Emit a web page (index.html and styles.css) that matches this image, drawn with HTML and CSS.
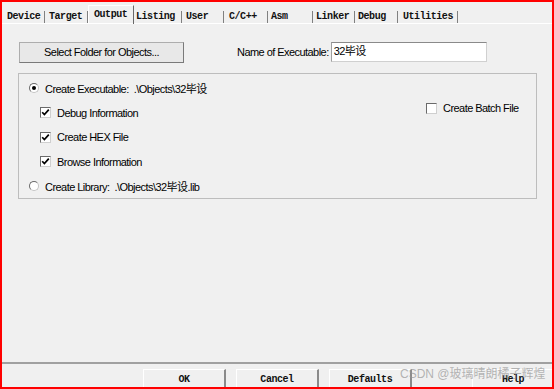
FILE: index.html
```html
<!DOCTYPE html>
<html lang="en">
<head>
<meta charset="UTF-8">
<meta name="viewport" content="width=device-width, initial-scale=1.0">
<title>Options for Target - Output</title>
<link rel="stylesheet" href="styles.css">
</head>
<body>
<div class="window">
    <div class="tabs">
        <div class="tab tab-device">Device</div>
        <div class="tab tab-target">Target</div>
        <div class="tab tab-output active">Output</div>
        <div class="tab tab-listing">Listing</div>
        <div class="tab tab-user">User</div>
        <div class="tab tab-cpp">C/C++</div>
        <div class="tab tab-asm">Asm</div>
        <div class="tab tab-linker">Linker</div>
        <div class="tab tab-debug">Debug</div>
        <div class="tab tab-utilities">Utilities</div>
    </div>

    <div class="panel">
        <div class="top-row">
            <button class="btn btn-folder">Select Folder for Objects...</button>
            <span class="field-label">Name of Executable:</span>
            <div class="text-input">32毕设</div>
        </div>

        <div class="group">
            <div class="group-main">
                <div class="opt">
                    <span class="radio checked"></span>
                    <span>Create Executable:&nbsp;&nbsp;.\Objects\32毕设</span>
                </div>
                <div class="opt sub">
                    <span class="check"><svg viewBox="0 0 9 9" width="9" height="9"><path d="M1.2 4.2 L3.4 6.6 L7.8 1.6" fill="none" stroke="#000" stroke-width="1.7"/></svg></span>
                    <span>Debug Information</span>
                </div>
                <div class="opt sub">
                    <span class="check"><svg viewBox="0 0 9 9" width="9" height="9"><path d="M1.2 4.2 L3.4 6.6 L7.8 1.6" fill="none" stroke="#000" stroke-width="1.7"/></svg></span>
                    <span>Create HEX File</span>
                </div>
                <div class="opt sub">
                    <span class="check"><svg viewBox="0 0 9 9" width="9" height="9"><path d="M1.2 4.2 L3.4 6.6 L7.8 1.6" fill="none" stroke="#000" stroke-width="1.7"/></svg></span>
                    <span>Browse Information</span>
                </div>
                <div class="opt">
                    <span class="radio"></span>
                    <span>Create Library:&nbsp;&nbsp;.\Objects\32毕设.lib</span>
                </div>
            </div>
            <div class="group-side">
                <div class="opt">
                    <span class="check"></span>
                    <span>Create Batch File</span>
                </div>
            </div>
        </div>
    </div>

    <div class="footer">
        <button class="btn-mono">OK</button>
        <button class="btn-mono">Cancel</button>
        <button class="btn-mono">Defaults</button>
        <button class="btn-mono btn-help">Help</button>
    </div>

    <div class="watermark">CSDN @玻璃晴朗橘子辉煌</div>
</div>
</body>
</html>
```

FILE: styles.css
```css
body {
    margin: 0;
    padding: 0;
    background-color: #f0f0f0;
}
.window {
    position: relative;
    width: 554px;
    height: 389px;
    box-sizing: border-box;
    border: 2px solid #ff0000;
    background-color: #f0f0f0;
    overflow: hidden;
    display: flex;
    flex-direction: column;
    font-family: "Liberation Sans", "Noto Sans CJK SC", sans-serif;
    font-size: 11px;
    letter-spacing: -0.55px;
    color: #000;
}

/* tab strip */
.tabs {
    display: flex;
    align-items: flex-end;
    height: 21px;
    padding-left: 1px;
    border-bottom: 1px solid #ffffff;
    font-family: "Liberation Mono", monospace;
    font-weight: bold;
    font-size: 10px;
    letter-spacing: -0.45px;
    color: #111;
}
.tab {
    box-sizing: border-box;
    height: 12px;
    line-height: 12px;
    padding-left: 4px;
    border-right: 1px solid #808080;
    white-space: nowrap;
}
.tab.active {
    height: 19px;
    line-height: 18px;
    padding-left: 5px;
    border-top: 1px solid #ffffff;
    border-left: 1px solid #ffffff;
    border-right: 1px solid #696969;
    margin-bottom: -1px;
}
.tab-device { width: 42px; }
.tab-target { width: 43px; }
.tab-output { width: 46px; }
.tab-listing { width: 48px; padding-left: 2px; }
.tab-user { width: 42px; }
.tab-cpp { width: 44px; padding-left: 5px; }
.tab-asm { width: 45px; padding-left: 3px; }
.tab-linker { width: 42px; padding-left: 3px; }
.tab-debug { width: 43px; padding-left: 3px; }
.tab-utilities { width: 60px; padding-left: 5px; }

/* page body */
.panel {
    flex: 1;
    padding: 18px 0 0 16px;
}
.top-row {
    display: flex;
    align-items: center;
    height: 20px;
}
.btn {
    font-family: inherit;
    font-size: inherit;
    letter-spacing: inherit;
    color: #000;
    background-color: #e8e8e8;
    border: 1px solid #adadad;
    border-right-color: #7a7a7a;
    border-bottom-color: #7a7a7a;
    padding: 0;
    cursor: pointer;
}
.btn-folder {
    width: 165px;
    height: 21px;
    margin-left: 1px;
}
.field-label {
    margin-left: 53px;
}
.text-input {
    box-sizing: border-box;
    width: 156px;
    height: 20px;
    margin-left: 2px;
    padding-left: 2px;
    line-height: 17px;
    background-color: #fff;
    border: 1px solid #d0d0d0;
    border-top-color: #8a8a8a;
    border-left-color: #a0a0a0;
}

/* group box */
.group {
    box-sizing: border-box;
    display: flex;
    width: 519px;
    height: 126px;
    margin-top: 11px;
    border: 1px solid #bdbdbd;
}
.group-main {
    width: 407px;
    display: flex;
    flex-direction: column;
    gap: 8.5px;
    padding: 6px 0 0 10px;
    box-sizing: border-box;
}
.group-side {
    padding-top: 26px;
}
.opt {
    display: flex;
    align-items: center;
    height: 16px;
    white-space: nowrap;
}
.opt.sub {
    padding-left: 11px;
}
.radio {
    box-sizing: border-box;
    width: 10px;
    height: 10px;
    margin-right: 6px;
    border: 1px solid #6a6a6a;
    border-bottom-color: #c4c4c4;
    border-right-color: #c4c4c4;
    border-radius: 50%;
    background-color: #fff;
    display: flex;
    align-items: center;
    justify-content: center;
}
.radio.checked::after {
    content: "";
    width: 4px;
    height: 4px;
    border-radius: 50%;
    background-color: #000;
}
.check {
    box-sizing: border-box;
    width: 11px;
    height: 11px;
    margin-right: 6px;
    border: 1px solid #6a6a6a;
    border-bottom-color: #cfcfcf;
    border-right-color: #cfcfcf;
    background-color: #fff;
    display: flex;
    align-items: center;
    justify-content: center;
}
.check svg {
    display: block;
}

/* buttons at the bottom */
.footer {
    height: 18px;
    flex: none;
    display: flex;
    gap: 10px;
    padding: 5px 0 0 141px;
    border-top: 2px solid #a0a0a0;
}
.btn-mono {
    flex: none;
    width: 83px;
    height: 24px;
    padding: 0 0 4px 0;
    font-family: "Liberation Mono", monospace;
    font-weight: bold;
    font-size: 10px;
    letter-spacing: -0.45px;
    color: #111;
    background-color: #f0f0f0;
    border: 1px solid #ffffff;
    border-right: 2px solid #8a8a8a;
    border-bottom-color: #8a8a8a;
}
.btn-help {
    margin-left: 50px;
}

.watermark {
    position: absolute;
    left: 398px;
    top: 362px;
    font-family: "Liberation Sans", "Noto Sans CJK SC", sans-serif;
    font-size: 12px;
    letter-spacing: 0;
    color: rgba(150, 150, 150, 0.7);
    white-space: nowrap;
}
```
